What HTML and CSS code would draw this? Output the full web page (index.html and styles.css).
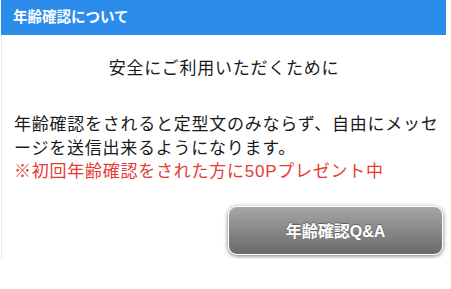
FILE: index.html
```html
<!DOCTYPE html>
<html lang="ja">
<head>
<meta charset="utf-8">
<title>年齢確認について</title>
<link rel="stylesheet" href="styles.css">
</head>
<body>
<div class="panel">
  <div class="panel-head">年齢確認について</div>
  <div class="panel-body">
    <p class="lead">安全にご利用いただくために</p>
    <p class="desc">年齢確認をされると定型文のみならず、自由にメッセ<br>ージを送信出来るようになります。<br><span class="note">※初回年齢確認をされた方に50Pプレゼント中</span></p>
    <div class="actions">
      <a class="btn" href="#">年齢確認Q&amp;A</a>
    </div>
  </div>
</div>
</body>
</html>
```
FILE: styles.css
```css
html, body {
  margin: 0;
  padding: 0;
  background: #ffffff;
}
body {
  font-family: "Liberation Sans", "Noto Sans CJK JP", sans-serif;
  color: #1a1a1a;
}
.panel {
  width: 445px;
  margin-left: 1px;
  border-left: 1px solid #ececec;
  box-sizing: border-box;
  padding-bottom: 4px;
}
.panel-head {
  height: 35px;
  margin-left: -1px;
  background: #2b8cec;
  color: #ffffff;
  font-weight: bold;
  font-size: 14.5px;
  line-height: 35px;
  padding-left: 12px;
}
.panel-body {
  padding: 0 0 0 12px;
}
.lead {
  margin: 22px 0 0 0;
  text-align: center;
  font-size: 17px;
  letter-spacing: 0.75px;
  line-height: 23.5px;
  padding-right: 12px;
}
.desc {
  margin: 32.5px 0 0 0;
  font-size: 17px;
  letter-spacing: 0.75px;
  line-height: 23.5px;
  white-space: nowrap;
}
.note {
  color: #e53a35;
}
.actions {
  display: flex;
  justify-content: flex-end;
  margin-top: 22px;
  padding-right: 3px;
}
.btn {
  display: flex;
  align-items: center;
  justify-content: center;
  width: 215px;
  height: 49px;
  box-sizing: border-box;
  border: 1px solid #ffffff;
  border-radius: 9px;
  background: linear-gradient(#a6a6a6, #6a6a6a);
  box-shadow: 0 1px 4px rgba(0, 0, 0, 0.55);
  color: #ffffff;
  font-weight: bold;
  font-size: 16px;
  text-decoration: none;
  text-shadow: 0 -1px 1px rgba(0, 0, 0, 0.35);
}
```
